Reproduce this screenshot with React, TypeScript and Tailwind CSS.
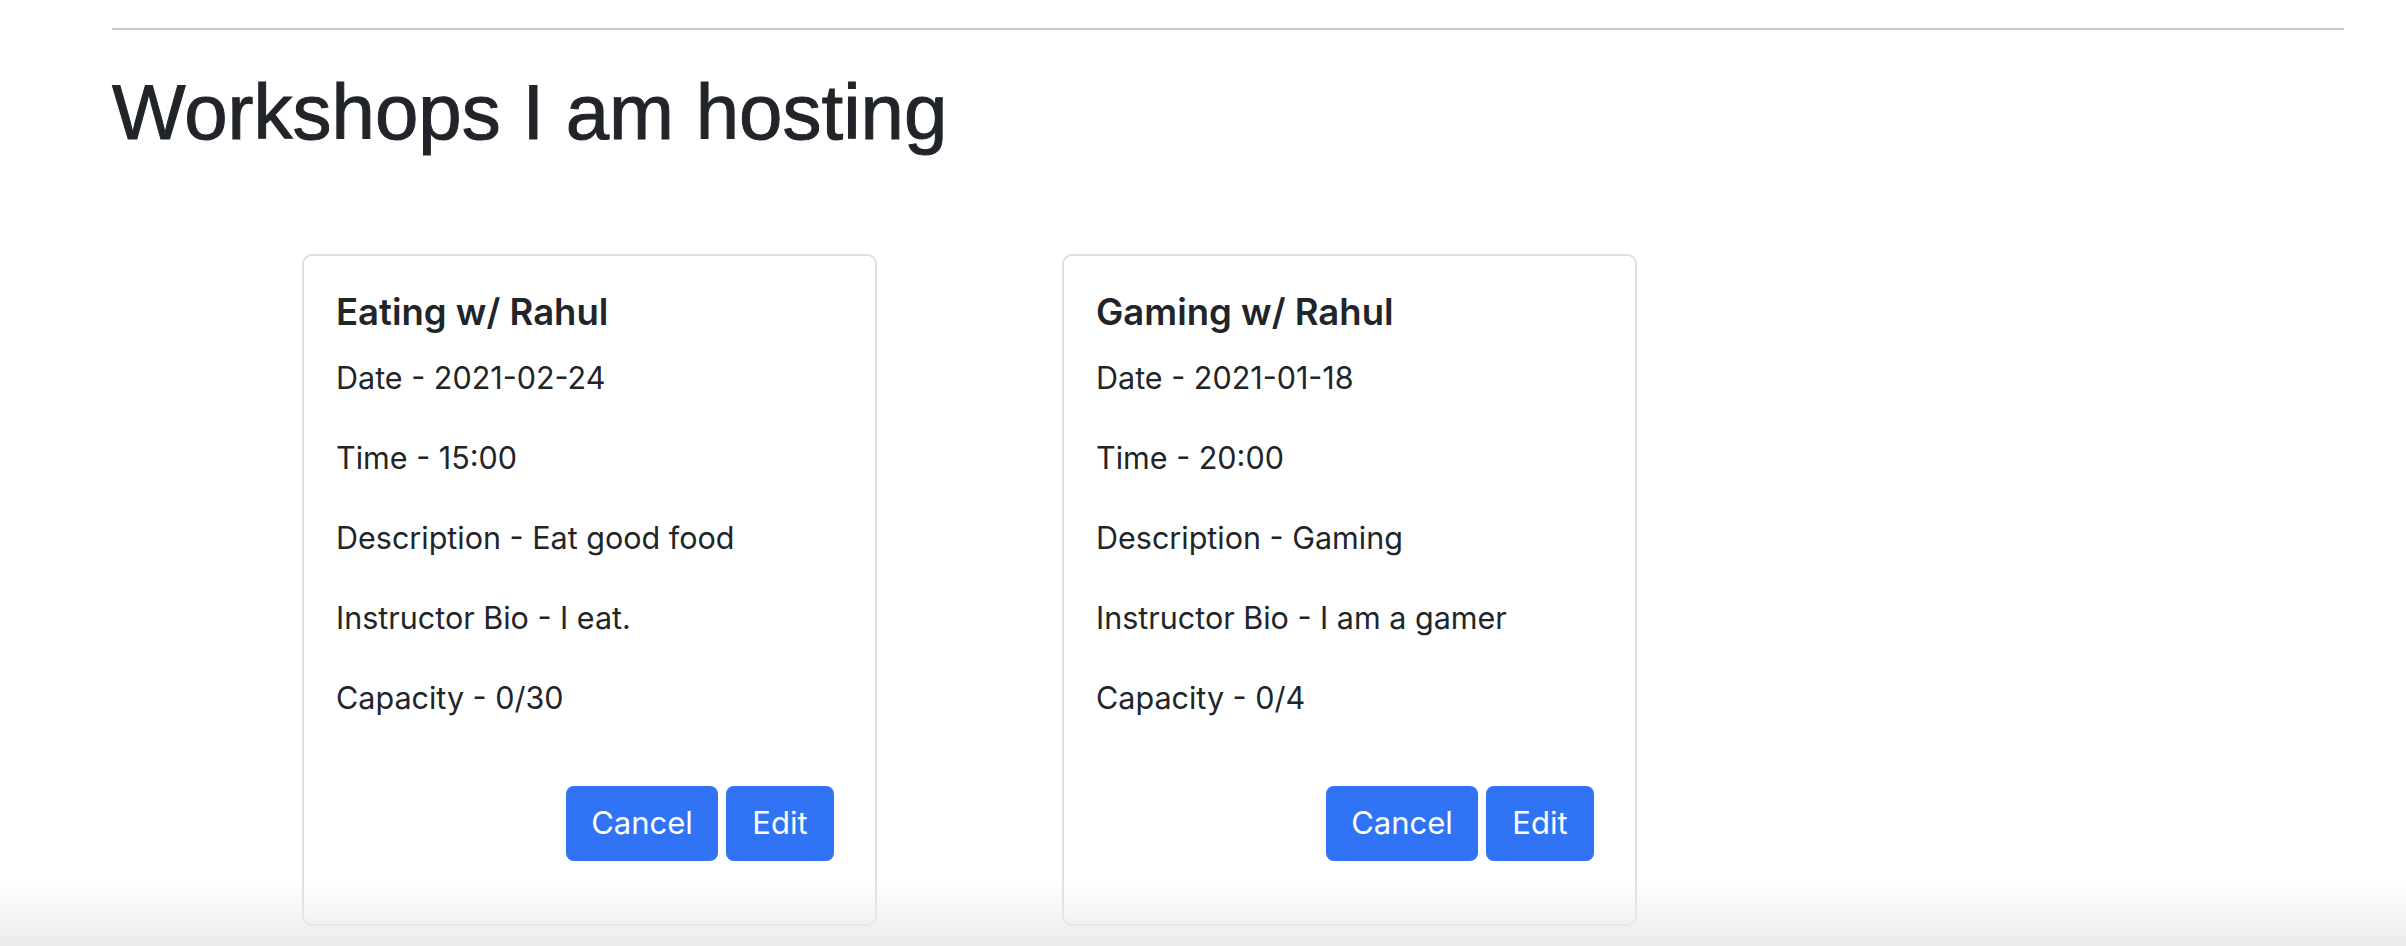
import React from "react";

type Workshop = {
  title: string;
  date: string;
  time: string;
  description: string;
  bio: string;
  capacity: string;
};

const workshops: Workshop[] = [
  {
    title: "Eating w/ Rahul",
    date: "2021-02-24",
    time: "15:00",
    description: "Eat good food",
    bio: "I eat.",
    capacity: "0/30",
  },
  {
    title: "Gaming w/ Rahul",
    date: "2021-01-18",
    time: "20:00",
    description: "Gaming",
    bio: "I am a gamer",
    capacity: "0/4",
  },
];

function Card({ w }: { w: Workshop }) {
  const lines = [
    `Date - ${w.date}`,
    `Time - ${w.time}`,
    `Description - ${w.description}`,
    `Instructor Bio - ${w.bio}`,
    `Capacity - ${w.capacity}`,
  ];
  return (
    <div className="w-[575px] h-[672px] shrink-0 border-2 border-[#dfdfdf] rounded-[10px] bg-white flex flex-col pl-[32px] pr-[41px] pt-[35px] pb-[63px]">
      <h5 className="text-[36.5px] leading-[1.2] font-semibold text-[#212529] mb-[20px]">
        {w.title}
      </h5>
      <div className="flex flex-col gap-[32px]">
        {lines.map((l) => (
          <p key={l} className="text-[30.5px] leading-[48px] text-[#212529]">
            {l}
          </p>
        ))}
      </div>
      <div className="mt-auto flex justify-end gap-[8px]">
        <button className="h-[75px] w-[152px] rounded-[8px] bg-[#3073f4] text-white text-[31px]">
          Cancel
        </button>
        <button className="h-[75px] w-[108px] rounded-[8px] bg-[#3073f4] text-white text-[31px]">
          Edit
        </button>
      </div>
    </div>
  );
}

export default function App() {
  return (
    <div
      className="relative w-full h-[946px] bg-white overflow-hidden"
      style={{ fontFamily: "Inter, 'Noto Sans', sans-serif" }}
    >
      <div className="pl-[112px] pr-[62px] pt-[28px]">
        <div className="h-[2px] bg-[#c8c8c8]" />
        <h1
          className="mt-[36px] text-[78px] leading-[1.2] font-medium text-[#212529] [-webkit-text-stroke:1px_#212529]"
          style={{ fontFamily: "'Liberation Sans', Arial, sans-serif" }}
        >
          Workshops I am hosting
        </h1>
        <div className="mt-[94px] pl-[190px] flex gap-[185px]">
          {workshops.map((w) => (
            <Card key={w.title} w={w} />
          ))}
        </div>
      </div>
      <div className="pointer-events-none absolute left-0 right-0 bottom-0 h-[66px] bg-gradient-to-b from-[rgba(235,235,235,0)] to-[#ebebeb]" />
    </div>
  );
}
